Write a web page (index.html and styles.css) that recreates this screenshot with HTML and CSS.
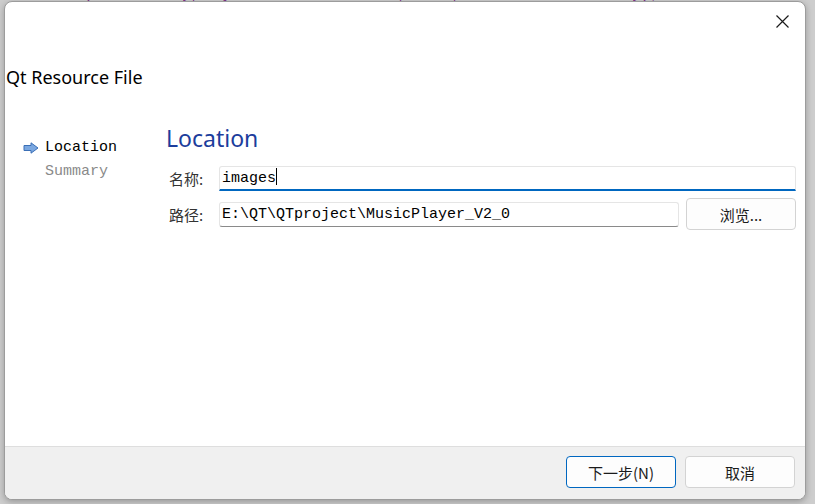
FILE: index.html
```html
<!doctype html>
<html>
    <head>
        <meta charset="utf-8">
        <title>Qt Resource File</title>
        <link rel="stylesheet" href="styles.css">
    </head>
    <body>
        <div id="masaustu">
            <div class="kod-ust">connect(ui-&gt;btnPlay, &amp;QPushButton::clicked, this, &amp;MainWindow::onPlay);</div>

            <div id="sihirbaz">
                <div class="baslik-cubugu">
                    <button class="kapat" title="Kapat">
                        <svg width="13" height="13" viewBox="0 0 13 13">
                            <path d="M0.5 0.5 L12.5 12.5 M12.5 0.5 L0.5 12.5" stroke="#1b1b1b" stroke-width="1.2" fill="none"/>
                        </svg>
                    </button>
                </div>
                <div class="sayfa-basligi">Qt Resource File</div>

                <div class="govde">
                    <ul class="adimlar">
                        <li class="adim aktif">
                            <svg class="ok" width="16" height="12" viewBox="0 0 16 12">
                                <path d="M1 3.5 H8 V0.8 L15 6 L8 11.2 V8.5 H1 Z" fill="#7aa7e0" stroke="#3b6fb6" stroke-width="1"/>
                            </svg>
                            Location
                        </li>
                        <li class="adim">Summary</li>
                    </ul>

                    <div class="sayfa">
                        <h1 class="sayfa-adi">Location</h1>
                        <div class="form">
                            <label class="etiket">名称:</label>
                            <div class="alan odak">images<span class="imlec"></span></div>

                            <label class="etiket">路径:</label>
                            <div class="satir">
                                <div class="alan">E:\QT\QTproject\MusicPlayer_V2_0</div>
                                <button class="dugme gozat">浏览...</button>
                            </div>
                        </div>
                    </div>
                </div>

                <div class="alt-cubuk">
                    <button class="dugme varsayilan">下一步(N)</button>
                    <button class="dugme">取消</button>
                </div>
            </div>
        </div>
    </body>
</html>
```

FILE: styles.css
```css
*{
    margin: 0px;
    padding: 0px;
    box-sizing: border-box;
}
body{
    width: 815px;
    height: 504px;
    overflow: hidden;
    background-color: #cdcdcd;
}
#masaustu{
    position: relative;
    width: 815px;
    height: 504px;
    background-color: #cdcdcd;
}
.kod-ust{
    position: absolute;
    left: 20px;
    top: -13px;
    font-family: "Liberation Mono", monospace;
    font-size: 15px;
    line-height: 16px;
    color: #7a2a86;
    white-space: nowrap;
}
#sihirbaz{
    position: absolute;
    left: 4px;
    top: 1px;
    width: 802px;
    height: 499px;
    display: flex;
    flex-direction: column;
    background-color: #ffffff;
    border: 1px solid #9c9c9c;
    border-radius: 8px;
    overflow: hidden;
    box-shadow: 0px 2px 6px rgba(0, 0, 0, 0.25);
    font-family: "Noto Sans", "Noto Sans CJK SC", sans-serif;
}
.baslik-cubugu{
    height: 58px;
    display: flex;
    justify-content: flex-end;
    align-items: flex-start;
}
.kapat{
    width: 46px;
    height: 38px;
    border: none;
    background: transparent;
    display: flex;
    justify-content: center;
    align-items: center;
}
.sayfa-basligi{
    height: 34px;
    padding-left: 1px;
    font-size: 18px;
    line-height: 34px;
    color: #000000;
}
.govde{
    flex: 1;
    display: flex;
    padding-top: 28px;
}
.adimlar{
    width: 162px;
    list-style: none;
    padding-left: 18px;
    padding-top: 14px;
    font-family: "Liberation Mono", "Noto Sans CJK SC", monospace;
    font-size: 15px;
}
.adim{
    height: 24px;
    line-height: 24px;
    padding-left: 22px;
    color: #8a8a8a;
    position: relative;
}
.adim.aktif{
    color: #000000;
}
.ok{
    position: absolute;
    left: 0px;
    top: 6px;
}
.sayfa{
    flex: 1;
    padding-right: 9px;
}
.sayfa-adi{
    font-weight: normal;
    font-size: 23px;
    line-height: 32px;
    color: #1c3d9c;
    margin-bottom: 12px;
    margin-left: -1px;
}
.form{
    display: grid;
    grid-template-columns: 50px 1fr;
    row-gap: 7px;
    align-items: center;
    padding-left: 2px;
}
.etiket{
    font-family: "Noto Sans CJK SC", sans-serif;
    font-size: 15px;
    color: #333333;
}
.alan{
    height: 25px;
    padding-left: 2px;
    border: 1px solid #e5e5e5;
    border-bottom: 1px solid #8a8a8a;
    border-radius: 3px;
    font-family: "Liberation Mono", monospace;
    font-size: 15px;
    line-height: 23px;
    color: #000000;
    background-color: #ffffff;
}
.alan.odak{
    border-bottom: 2px solid #0067c0;
    border-radius: 3px 3px 0px 0px;
}
.imlec{
    display: inline-block;
    width: 1px;
    height: 17px;
    vertical-align: -3px;
    background-color: #000000;
}
.satir{
    display: flex;
    align-items: center;
    gap: 7px;
}
.satir .alan{
    flex: 1;
}
.dugme{
    width: 110px;
    height: 32px;
    border: 1px solid #d3d3d3;
    border-radius: 4px;
    background-color: #fdfdfd;
    font-family: "Noto Sans CJK SC", sans-serif;
    font-size: 15px;
    color: #1b1b1b;
}
.alt-cubuk{
    height: 53px;
    display: flex;
    justify-content: flex-end;
    align-items: flex-start;
    gap: 9px;
    padding-top: 9px;
    padding-right: 10px;
    background-color: #f0f0f0;
    border-top: 1px solid #dedede;
}
.varsayilan{
    border: 1px solid #0067c0;
}
```
